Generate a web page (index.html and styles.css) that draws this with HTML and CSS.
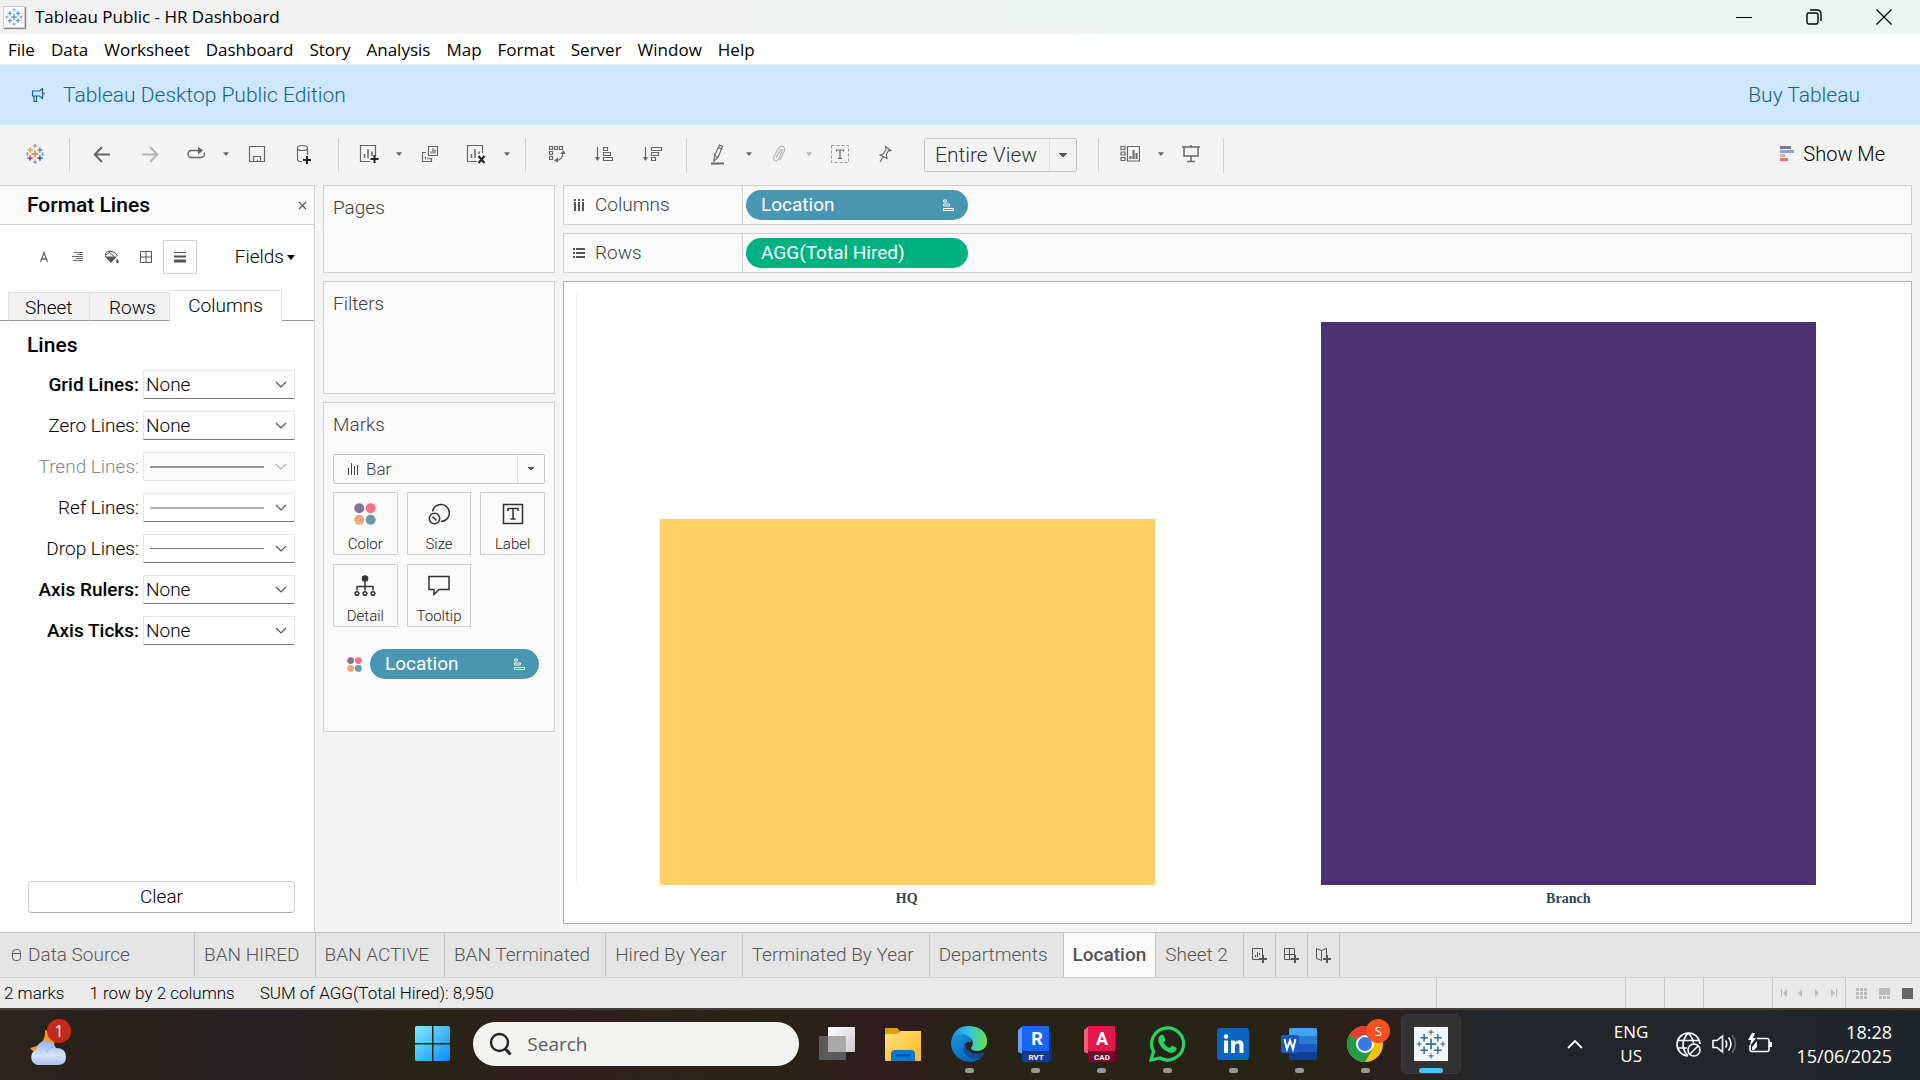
FILE: index.html
```html
<!DOCTYPE html>
<html lang="en">
<head>
<meta charset="utf-8">
<title>Tableau Public - HR Dashboard</title>
<link rel="stylesheet" href="styles.css">
</head>
<body>
<svg class="defs" aria-hidden="true">
  <defs>
    <symbol id="logo" viewBox="0 0 24 24">
      <path d="M12 7.8v8.4M7.8 12h8.4" stroke-width="1.4"/>
      <path d="M6.5 4v6M3.5 7h6M17.5 4v6M14.5 7h6M6.5 14v6M3.5 17h6M17.5 14v6M14.5 17h6" stroke-width="1.2"/>
      <path d="M12 .5v4M10 2.500h4M12 19.500v4M10 21.500h4M2.500 10v4M.5 12h4M21.500 10v4M19.500 12h4" stroke-width=".9"/>
    </symbol>
    <symbol id="caret" viewBox="0 0 8 5"><path d="M0 0h8l-4 5z" fill="currentColor"/></symbol>
    <symbol id="sorted" viewBox="0 0 12 13"><path d="M1 1h3v2H1zM1 5h6v2H1zM1 9.500h10v2H1z" fill="none" stroke="currentColor"/></symbol>
    <symbol id="dots" viewBox="0 0 22 22">
      <circle cx="5.300" cy="5.300" r="5" fill="#857099"/><circle cx="16.700" cy="5.300" r="5" fill="#fa6f80"/>
      <circle cx="5.300" cy="16.700" r="5" fill="#f4a77f"/><circle cx="16.700" cy="16.700" r="5" fill="#6f98a6"/>
    </symbol>
  </defs>
</svg>

<header class="titlebar">
  <span class="app-icon"><svg width="18" height="18" stroke="#3a7fa8"><use href="#logo"/></svg></span>
  <h1 class="app-title">Tableau Public - HR Dashboard</h1>
  <div class="window-buttons">
    <button aria-label="Minimize"><svg width="16" height="16"><path d="M0 8.500h16" stroke="#000" stroke-width="1"/></svg></button>
    <button aria-label="Restore"><svg width="16" height="16" fill="none" stroke="#000" stroke-width="1.400"><rect x="1" y="4" width="11" height="11" rx="2"/><path d="M4 1h7q4 0 4 4v7"/></svg></button>
    <button aria-label="Close"><svg width="16" height="16"><path d="M.5.5l15 15M15.500.5l-15 15" stroke="#000" stroke-width="1.300"/></svg></button>
  </div>
</header>

<nav class="menubar" aria-label="Main menu">
  <button>File</button><button>Data</button><button>Worksheet</button><button>Dashboard</button><button>Story</button><button>Analysis</button><button>Map</button><button>Format</button><button>Server</button><button>Window</button><button>Help</button>
</nav>

<div class="banner">
  <svg class="megaphone" width="14" height="14" fill="none" stroke="#17628f" stroke-width="1.200"><path d="M8.500 3H1.500v5h7l3 2.500v-10zM3 8v5.500h2.500V8M13 4.500v2"/></svg>
  <span>Tableau Desktop Public Edition</span>
  <a href="#" class="buy">Buy Tableau</a>
</div>

<div class="toolbar" role="toolbar" aria-label="Toolbar">
  <button class="tool start" aria-label="Start page"><svg width="18" height="22" viewBox="2 0 20 24" fill="none">
    <path d="M12 8v8M8 12h8" stroke="#e8762c" stroke-width="1.500"/>
    <path d="M6.500 4.500v6M3.500 7.500h6" stroke="#eb912b" stroke-width="1.400"/><path d="M17.500 4.500v6M14.500 7.500h6" stroke="#59879b" stroke-width="1.400"/>
    <path d="M6.500 13.500v6M3.500 16.500h6" stroke="#c72035" stroke-width="1.400"/><path d="M17.500 13.500v6M14.500 16.500h6" stroke="#1f457e" stroke-width="1.400"/>
    <path d="M12 1v4M10 3h4M12 19v4M10 21h4M3.500 10v4M2 12h3M20.500 10v4M19 12h3" stroke="#7199a6" stroke-width="1.200"/></svg></button>
  <i class="sep"></i>
  <button class="tool wide" aria-label="Undo"><svg width="18" height="18"><path d="M17 9.500H2M9 2L1.800 9.500 9 17"/></svg></button>
  <button class="tool wide off" aria-label="Redo"><svg width="18" height="18"><path d="M1 9.500h15M9 2l7.200 7.500L9 17"/></svg></button>
  <button class="tool" aria-label="Replay"><svg width="19" height="16"><path d="M12 4.500H4.500a3.500 3.500 0 0 0 0 7H14a3.500 3.500 0 0 0 3.200-5" stroke-width="1.400"/><path d="M11 .5l5 4-5 4z" fill="currentColor" stroke="none"/></svg></button>
  <button class="drop" aria-label="Replay options"><svg width="6" height="4"><use href="#caret"/></svg></button>
  <button class="tool mid" aria-label="Save"><svg width="18" height="18"><path d="M1.500 1.500h15v15h-15zM5.500 16.500v-5h7v5M9.500 16.500v-2" stroke-width="1.200"/></svg></button>
  <button class="tool wide" aria-label="New data source"><svg width="16" height="20"><path d="M6 17.500H3.500Q1.500 17 1.500 15.500V4q0-2.500 5-2.500T11.500 4v7M1.500 4.500q0 2 5 2t5-2" stroke-width="1.200"/><path d="M11 12v8M7 16h8" stroke="#222" stroke-width="2"/></svg></button>
  <i class="sep"></i>
  <button class="tool" aria-label="New worksheet"><svg width="20" height="20"><path d="M11 17.500H1.500v-16h15V12" stroke-width="1.200"/><path d="M5.500 14v-4M9 14V5M13 12V7.500" stroke-width="1.500"/><path d="M15.500 11v8M11.500 15h8" stroke="#222" stroke-width="2"/></svg></button>
  <button class="drop" aria-label="New worksheet options"><svg width="6" height="4"><use href="#caret"/></svg></button>
  <button class="tool mid" aria-label="Duplicate"><svg width="18" height="18"><path d="M7.500 1.500h9v9h-9zM5 7.500H1.500v9h9V13M4.500 14.500v-3M7 14.500v-2M9 14.500v-2M10 8.500v-2M12 8.500v-5M14 8.500v-4" stroke-width="1.200"/></svg></button>
  <button class="tool mid" aria-label="Clear sheet"><svg width="20" height="20"><path d="M11 17.500H1.500v-16h15V9" stroke-width="1.200"/><path d="M5.500 14v-4M9 14V5M13 10V7.500" stroke-width="1.500"/><path d="M12.500 12l6 7M18.500 12l-6 7" stroke="#222" stroke-width="2"/></svg></button>
  <button class="drop" aria-label="Clear options"><svg width="6" height="4"><use href="#caret"/></svg></button>
  <i class="sep"></i>
  <button class="tool mid" aria-label="Swap rows and columns"><svg width="18" height="18"><path d="M1.500 1.500h3v3h-3zM6.500 1.500h3v3h-3zM11.500 1.500h3v3h-3zM1.500 6.500h3v3h-3zM1.500 11.500h3v3h-3zM8 15.500q6.500 0 7-8" stroke-width="1.200"/><path d="M6 15.500l4-3v5zM15.500 5l-3 4h5z" fill="currentColor" stroke="none"/></svg></button>
  <button class="tool wide" aria-label="Sort ascending"><svg width="20" height="18"><path d="M3.500 2v13M9.500 2.500h4v3h-4zM9.500 7.500h7v3h-7zM9.500 12.500h9v3h-9z" stroke-width="1.200"/><path d="M1 12h5l-2.500 4z" fill="currentColor" stroke="none"/></svg></button>
  <button class="tool wide" aria-label="Sort descending"><svg width="20" height="18"><path d="M3.500 2v13M9.500 2.500h10v3h-10zM9.500 7.500h7v3h-7zM9.500 12.500h4v3h-4z" stroke-width="1.200"/><path d="M1 12h5l-2.500 4z" fill="currentColor" stroke="none"/></svg></button>
  <i class="sep"></i>
  <button class="tool mid" aria-label="Highlight"><svg width="14" height="22"><path d="M8.500 2l3 1.500-4.500 11-4 3.500.5-5.500zM3.500 12.500L7 14.500M7.500 4.500l3 1.500" stroke-width="1.200"/><path d="M0 20.500h13" stroke-width="2"/></svg></button>
  <button class="drop" aria-label="Highlight options"><svg width="6" height="4"><use href="#caret"/></svg></button>
  <button class="tool off" aria-label="Group members"><svg width="14" height="18"><path d="M4 12.500L8.500 5q1.500-1.500 2 .5L6.500 14Q4.500 17 2.500 15.500 1 14 2 11.500L6.500 3Q8.500.5 11 1.500 13.500 3.500 12 7l-4.500 8.500" stroke-width="1.100"/></svg></button>
  <button class="drop off" aria-label="Group options"><svg width="6" height="4"><use href="#caret"/></svg></button>
  <button class="tool mid" aria-label="Show mark labels"><svg width="18" height="18"><rect x=".5" y=".5" width="17" height="17" stroke="#999" stroke-width="1" stroke-dasharray="3 2"/><path d="M5.500 6.500V5h7v1.500M9 5v8.500M7 13.500h4" stroke-width="1.200"/></svg></button>
  <button class="tool" aria-label="Fix axes"><svg width="15" height="18"><path d="M7.500 1.500l5.500 4-1.500.5-1-.5-2 4 .5 4-3-1.500L2 10l3-1 3-4.500zM5 12l-3 5" stroke-width="1.100"/></svg></button>
  <select class="fit" aria-label="Fit"><option>Entire View</option></select>
  <i class="sep"></i>
  <button class="tool mid" aria-label="Show cards"><svg width="20" height="18"><path d="M1 1.500h4v3H1zM1 7h4v3H1zM1 12.500h4v3H1zM7.500 1.500h12v14.500h-12z" stroke-width="1.200"/><path d="M10.500 14v-3M13.500 14V5M16.500 14V8" stroke-width="2"/></svg></button>
  <button class="drop" aria-label="Card options"><svg width="6" height="4"><use href="#caret"/></svg></button>
  <button class="tool" aria-label="Presentation mode"><svg width="18" height="18"><path d="M0 2h18M9 0v2M2 2v9h14V2M9 11v5M5 16.500h8" stroke-width="1.500"/></svg></button>
  <i class="sep"></i>
  <button class="show-me"><svg width="15" height="16"><path fill="#857099" d="M0 0h11v3H0z"/><path fill="#86a8d0" d="M0 4h14v3H0z"/><path fill="#f4a77f" d="M0 8h5v3H0z"/><path fill="#fa6f80" d="M0 12h8v3H0z"/></svg>Show Me</button>
</div>

<main class="workspace">
  <aside class="format" aria-label="Format Lines">
    <div class="format-head"><h2>Format Lines</h2><button aria-label="Close pane"><svg width="9" height="9"><path d="M1 1l7 7M8 1L1 8" stroke="#555" stroke-width="1.200"/></svg></button></div>
    <div class="format-kinds">
      <button aria-label="Font"><svg width="10" height="12"><path d="M1.500 11L5 1.500 8.500 11M3 8h4" fill="none" stroke="#666" stroke-width="1.300"/></svg></button>
      <button aria-label="Alignment"><svg width="12" height="12"><path d="M2 1.500h9M5 3.500h6M0 5.500h11M4 7.500h7M1 9.500h10" stroke="#666"/></svg></button>
      <button aria-label="Shading"><svg width="16" height="14"><path d="M1.500 7Q1 2.500 3.500 1.500q3-1 7.500 1L13.500 6M4.500 1.500L10 6.500M2 5l5-4" fill="none" stroke="#555"/><path d="M1 6.500h12L7 13zM13 8l2 4q-1.500 2-3 0z" fill="#555"/></svg></button>
      <button aria-label="Borders"><svg width="12" height="12"><path d="M.5.5h11v11H.5zM6 .5v11M.5 6h11" fill="none" stroke="#555"/></svg></button>
      <button class="current" aria-label="Lines"><svg width="12" height="12"><path d="M0 1.500h12" stroke="#555"/><path d="M0 5.500h12" stroke="#555" stroke-width="2"/><path d="M0 10h12" stroke="#555" stroke-width="3"/></svg></button>
      <button class="fields">Fields<svg width="8" height="5"><use href="#caret"/></svg></button>
    </div>
    <div class="format-tabs"><button>Sheet</button><button>Rows</button><button class="current">Columns</button></div>
    <h3>Lines</h3>
    <div class="line-form">
      <label class="set" for="grid">Grid Lines:</label><select id="grid"><option>None</option></select>
      <label for="zero">Zero Lines:</label><select id="zero"><option>None</option></select>
      <label class="dim" for="trend">Trend Lines:</label><select id="trend" class="line-mid" disabled><option></option></select>
      <label for="ref">Ref Lines:</label><select id="ref" class="line-pale"><option></option></select>
      <label for="dropl">Drop Lines:</label><select id="dropl" class="line-thin"><option></option></select>
      <label class="set" for="rulers">Axis Rulers:</label><select id="rulers"><option>None</option></select>
      <label class="set" for="ticks">Axis Ticks:</label><select id="ticks"><option>None</option></select>
    </div>
    <button class="clear">Clear</button>
  </aside>

  <div class="cards">
    <section class="card pages"><h2>Pages</h2></section>
    <section class="card filters"><h2>Filters</h2></section>
    <section class="card marks">
      <h2>Marks</h2>
      <div class="mark-type">
        <svg width="12" height="14"><path d="M1.500 13V6M4.500 13V1M7.500 13V4M10.500 13V3" stroke="#444"/></svg>
        <select aria-label="Mark type"><option>Bar</option></select>
      </div>
      <div class="mark-grid">
        <button><svg width="22" height="22"><use href="#dots"/></svg>Color</button>
        <button><svg width="22" height="22" fill="none" stroke="#333" stroke-width="1.500"><path d="M4.500 8.500A8.500 8.500 0 1 1 13 18.500"/><circle cx="6.500" cy="15.500" r="5.200"/><path d="M4.500 13.500l4 4"/></svg>Size</button>
        <button><svg width="22" height="22" fill="none" stroke="#333" stroke-width="1.500"><rect x="1.500" y="1.500" width="19" height="19"/><path d="M6 8V5.500h10V8M11 5.500V16M8.500 16h5"/></svg>Label</button>
        <button><svg width="22" height="22" fill="none" stroke="#333" stroke-width="1.500"><circle cx="11" cy="3.500" r="3.300" fill="#333" stroke="none"/><path d="M11 6v9.500M3 15.500V11.500h16v4"/><circle cx="3" cy="18.500" r="1.800"/><circle cx="11" cy="18.500" r="1.800"/><circle cx="19" cy="18.500" r="1.800"/></svg>Detail</button>
        <button><svg width="22" height="22" fill="none" stroke="#333" stroke-width="1.500"><path d="M1 1.500h20v13H11l-5 5v-5H1z"/></svg>Tooltip</button>
      </div>
      <div class="mark-field"><svg width="15" height="15"><use href="#dots"/></svg><button class="pill blue">Location<svg width="13" height="13"><use href="#sorted"/></svg></button></div>
    </section>
  </div>

  <div class="sheet">
    <div class="shelf"><div class="shelf-name"><svg width="12" height="12"><path d="M1 0h2v2H1zM5 0h2v2H5zM9 0h2v2H9zM1 3h2v9H1zM5 3h2v9H5zM9 3h2v9H9z" fill="#555"/></svg>Columns</div><button class="pill blue">Location<svg width="13" height="13"><use href="#sorted"/></svg></button></div>
    <div class="shelf"><div class="shelf-name"><svg width="12" height="12"><path d="M0 1h2v2H0zM3 1h9v2H3zM0 5h2v2H0zM3 5h9v2H3zM0 9h2v2H0zM3 9h9v2H3z" fill="#555"/></svg>Rows</div><button class="pill green">AGG(Total Hired)</button></div>
    <div class="view">
      <div class="plot">
        <div class="bar hq" style="height:62%"></div>
        <div class="bar branch" style="height:95.300%"></div>
      </div>
      <div class="axis"><span>HQ</span><span>Branch</span></div>
    </div>
  </div>
</main>

<nav class="sheets" aria-label="Sheets">
  <button class="source"><svg width="9" height="12" fill="none" stroke="#555"><rect x=".5" y=".5" width="8" height="11" rx="3"/><path d="M.5 4.500h8"/></svg>Data Source</button>
  <button>BAN HIRED</button><button>BAN ACTIVE</button><button>BAN Terminated</button><button>Hired By Year</button><button>Terminated By Year</button><button>Departments</button><button class="current">Location</button><button>Sheet 2</button>
  <button class="add" aria-label="New worksheet"><svg width="16" height="16" fill="none" stroke="#555"><path d="M8 12.500H1.500v-11h10V8M4.500 10V8M6.500 10V5M8.500 8V6"/><path d="M12 8v8M8 12h8" stroke-width="2"/></svg></button>
  <button class="add" aria-label="New dashboard"><svg width="16" height="16" fill="none" stroke="#555"><path d="M8 12.500H1.500v-11h10V8M6.500 1.500v11M1.500 7.500h10"/><path d="M12 8v8M8 12h8" stroke-width="2"/></svg></button>
  <button class="add" aria-label="New story"><svg width="16" height="16" fill="none" stroke="#555"><path d="M7 13.500l-5.500-2v-10l5 2 5-2V8M6.500 3.500v10"/><path d="M12 8v8M8 12h8" stroke-width="2"/></svg></button>
</nav>

<footer class="status">
  <span>2 marks</span><span>1 row by 2 columns</span><span>SUM of AGG(Total Hired): 8,950</span>
  <div class="slots"><i></i><i></i><i></i><i></i>
    <div class="pager">
      <button aria-label="First"><svg width="7" height="8"><path d="M0 0h1v8H0zM6 0v8L2 4z"/></svg></button>
      <button aria-label="Previous"><svg width="7" height="8"><path d="M5 0v8L1 4z"/></svg></button>
      <button aria-label="Next"><svg width="7" height="8"><path d="M1 0v8l4-4z"/></svg></button>
      <button aria-label="Last"><svg width="7" height="8"><path d="M6 0h1v8H6zM1 0v8l4-4z"/></svg></button>
    </div>
    <div class="modes">
      <button aria-label="Sheet sorter"><svg width="11" height="11"><path d="M0 0h3v3H0zM4 0h3v3H4zM8 0h3v3H8zM0 4h3v3H0zM4 4h3v3H4zM8 4h3v3H8zM0 8h3v3H0zM4 8h3v3H4zM8 8h3v3H8z"/></svg></button>
      <button aria-label="Filmstrip"><svg width="11" height="11"><path d="M0 0h11v7H0zM0 8h3v3H0zM4 8h3v3H4zM8 8h3v3H8z"/></svg></button>
      <button class="current" aria-label="Tabs"><svg width="11" height="11"><path d="M0 0h11v11H0z"/></svg></button>
    </div>
  </div>
</footer>

<div class="taskbar">
  <button class="weather" aria-label="Weather, 1 alert">
    <svg width="42" height="46" viewBox="0 0 42 46">
      <defs><linearGradient id="cl" x2="0" y2="1"><stop offset="0" stop-color="#8fb4ee"/><stop offset=".6" stop-color="#d5e4fa"/><stop offset="1" stop-color="#a9c1ee"/></linearGradient></defs>
      <path d="M16 9q1 15-15 18 7 9 18 4 10-7 5-17-3-4-8-5z" fill="#f49b20"/>
      <path d="M8 44a8 8 0 0 1-1-15Q9 20 17 20q7 0 10 7 10 0 10 9 0 8-8 8z" fill="url(#cl)"/>
      <path d="M17 32q2-6 8-6" fill="none" stroke="#8cabe0"/>
    </svg><span class="badge">1</span>
  </button>
  <div class="apps">
    <button class="app" aria-label="Start"><svg width="36" height="36"><defs><linearGradient id="win" x2="1" y2="1"><stop offset="0" stop-color="#7deeff"/><stop offset="1" stop-color="#0b8cf5"/></linearGradient></defs><path d="M1.500 0H17v17H0V1.500Q0 0 1.500 0zM18.500 0h15q1.500 0 1.500 1.500V17H18.500zM0 18.500h17V35H1.500Q0 35 0 33.500zM18.500 18.500H35v15q0 1.500-1.500 1.500h-15z" fill="url(#win)"/></svg></button>
    <label class="search"><svg width="24" height="24" fill="none" stroke="#222"><circle cx="10.500" cy="10.500" r="8.500" stroke-width="2.400"/><path d="M16.500 17l5 5.500" stroke-width="3"/></svg><input type="search" placeholder="Search" aria-label="Search"></label>
    <button class="app" aria-label="Task view"><svg width="36" height="36"><defs><linearGradient id="tv" x2="1" y2="1"><stop offset="0" stop-color="#fff"/><stop offset="1" stop-color="#ccc"/></linearGradient></defs><rect y="10" width="27" height="24" rx="1" fill="#5a5a5a"/><rect x="9" y="1" width="27" height="25" rx="1" fill="url(#tv)"/><rect x="9" y="10" width="18" height="16" fill="#a9a9a9"/></svg></button>
    <button class="app" aria-label="File Explorer"><svg width="36" height="34"><defs><linearGradient id="fe" x2="1" y2="1"><stop offset="0" stop-color="#ffe28a"/><stop offset="1" stop-color="#fcb714"/></linearGradient></defs><path d="M0 2q0-1 1-1h11l4 4h19q1 0 1 1v6H0z" fill="#e0a008"/><path d="M0 7h12l4-3h20v29q0 1-1 1H1q-1 0-1-1z" fill="url(#fe)"/><path d="M6 34v-7q0-4 4-4h16q4 0 4 4v7z" fill="#0f78cf"/><path d="M11 28.500h14" stroke="#07438a" stroke-width="2"/></svg></button>
    <button class="app run" aria-label="Edge"><svg width="36" height="36"><defs><linearGradient id="e1" x2="1"><stop offset="0" stop-color="#1b8ee0"/><stop offset=".5" stop-color="#35c1e0"/><stop offset="1" stop-color="#6be34f"/></linearGradient><linearGradient id="e2" x2="1" y2="1"><stop offset="0" stop-color="#1b94e0"/><stop offset="1" stop-color="#0a57b0"/></linearGradient></defs><path d="M0 17Q2 0 18 0q17 1 18 15 0 9-9 10-7 0-7-3 3-4 1-8Q16 5 0 17z" fill="url(#e1)"/><path d="M0 18Q1 9 10 8q9 0 11 8-6-1-8 4-1 9 8 12 6 1 11-2-6 6-13 6Q2 34 0 18z" fill="url(#e2)"/><path d="M13 19q-2 8 5 12 8 3 14-2 2-2 1-3-8 4-15-1-4-3-3-8z" fill="#124e9c"/></svg></button>
    <button class="app run" aria-label="Revit"><svg width="34" height="36"><path d="M0 4l5-4v28l-5-2z" fill="#6f9cf0"/><path d="M4 0h27v25H4z" fill="#1866f5"/><path d="M31 6l3 0v30h-3z" fill="#0f2f74"/><path d="M4 25h27v11H4z" fill="#123c94"/><g fill="#fff" text-anchor="middle" class="tile-text"><text x="19" y="19" font-size="18">R</text><text x="18" y="34" font-size="8">RVT</text></g></svg></button>
    <button class="app run" aria-label="AutoCAD"><svg width="34" height="36"><path d="M0 4l5-4v28l-5-2z" fill="#f0607c"/><path d="M4 0h27v25H4z" fill="#e5154e"/><path d="M31 6h3v30h-3z" fill="#5f0822"/><path d="M4 25h27v11H4z" fill="#74092b"/><g fill="#fff" text-anchor="middle" class="tile-text"><text x="18" y="19" font-size="18">A</text><text x="18" y="34" font-size="8">CAD</text></g></svg></button>
    <button class="app run" aria-label="WhatsApp"><svg width="36" height="36"><path d="M2 34l2.500-8.500A16 16 0 1 1 11 32z" fill="none" stroke="#25d366" stroke-width="3.200"/><path d="M12 9q2-1 3 1l1.500 4-2 2.500q2 4 6 5.500l2.500-2.500 4 2q1.500 1 0 3-3 4-8 1.500-7-3-9.500-10Q8.500 11 12 9z" fill="#25d366"/></svg></button>
    <button class="app run" aria-label="LinkedIn"><svg width="32" height="32"><rect width="32" height="32" rx="3" fill="#0a66c2"/><path d="M7 12.500h4V25H7zM14 12.500h4v2q1.500-2.300 4.200-2.300 4.300 0 4.300 5.300V25h-4v-6.500q0-3-2-3-2.500 0-2.500 3V25h-4z" fill="#fff"/><circle cx="9" cy="8.500" r="2.300" fill="#fff"/></svg></button>
    <button class="app run" aria-label="Word"><svg width="36" height="32"><rect x="8" width="28" height="32" rx="2" fill="#103f91"/><path d="M8 16h28v8H8z" fill="#185abd"/><path d="M8 8h28v8H8z" fill="#2b7cd3"/><path d="M8 8V2q0-2 2-2h24q2 0 2 2v6z" fill="#41a5ee"/><rect y="7" width="18" height="18" rx="2" fill="#185abd"/><path d="M3.500 11l2.500 10L9 12.500 12 21l2.500-10" fill="none" stroke="#fff" stroke-width="2"/></svg></button>
    <button class="app run" aria-label="Chrome"><svg width="36" height="36"><circle cx="18" cy="18" r="18" fill="#f9c20a"/><path d="M18 18L2.400 9A18 18 0 0 1 33.600 9z" fill="#e33b2e"/><path d="M18 18L2.400 9A18 18 0 0 0 18 36l8-13.500z" fill="#229a48"/><circle cx="18" cy="18" r="9" fill="#fff"/><circle cx="18" cy="18" r="7" fill="#3279ea"/></svg><span class="badge orange">S</span></button>
    <button class="app run active" aria-label="Tableau Public"><svg width="34" height="34"><rect width="34" height="34" fill="#f4f5f6"/><svg x="2" y="2" width="30" height="30" stroke="#2f7299"><use href="#logo"/></svg></svg></button>
  </div>
  <div class="tray">
    <button class="chevron" aria-label="Hidden icons"><svg width="16" height="10"><path d="M1 9l7-7 7 7" fill="none" stroke="#fff" stroke-width="1.800"/></svg></button>
    <button class="lang">ENG<br>US</button>
    <button class="quick" aria-label="Network, volume, battery">
      <svg width="25" height="25" fill="none" stroke="#fff" stroke-width="1.600"><path d="M12 24A11.500 11.500 0 1 1 24 12M12 24q-10-11 0-23 5 5 5.500 10M1 8.500h22M1 16h10"/><circle cx="18" cy="18" r="6"/><path d="M14 22l8-8"/></svg>
      <svg width="25" height="22" fill="none" stroke="#fff" stroke-width="1.600"><path d="M1 7.500h4L10.500 3v16L5 14.500H1zM13.500 7.500q2.500 3.500 0 7M16.500 4.500q5 6.500 0 13"/><path d="M20 2q7 9 0 18" stroke="#666"/></svg>
      <svg width="25" height="22" fill="none" stroke="#fff" stroke-width="1.600"><path d="M9 5.500h10q2 0 2 2v9q0 2-2 2H4q-2 0-2-2V12"/><path d="M4 0L0 7h3l-1 6 6-8H5l2-5zM4 17v-3l5-6v6l-3 3zM21 9h3v5h-3z" fill="#fff" stroke="none"/></svg>
    </button>
    <button class="clock">18:28<br>15/06/2025</button>
  </div>
</div>
</body>
</html>
```
FILE: styles.css
```css
* { box-sizing: border-box; }

:root {
  --ui: Roboto, "Liberation Sans", sans-serif;
  --system: "Open Sans", "Noto Sans", sans-serif;
  --rule: #d0d0d0;
  --ink: #404040;
}

body {
  margin: 0;
  min-height: 100vh;
  display: flex;
  flex-direction: column;
  background: #f4f4f4;
  color: #000;
  font: 300 19px/24px var(--ui);
}

h1, h2, h3 { margin: 0; font: inherit; }
button { margin: 0; padding: 0; border: 0; background: none; color: inherit; font: inherit; }
select { margin: 0; border-radius: 0; color: inherit; font: inherit; appearance: none; }
svg { display: block; flex: none; }
.defs { position: absolute; width: 0; height: 0; }

/* Window frame */
.titlebar {
  height: 34px;
  display: flex;
  align-items: center;
  padding: 0 1px 0 3px;
  background: linear-gradient(90deg, #f2f1f3, #f2f2f2 35%, #e9f5f1 70%, #eaf6f2);
  font: 400 17px/24px var(--system);
}
.app-icon { padding: 1px; background: #fafafa; border: 1px solid #ccc; box-shadow: 1px 1px 1px #888; }
.app-title { padding-left: 10px; }
.window-buttons { margin-left: auto; display: flex; }
.window-buttons button { width: 70px; height: 34px; display: grid; place-items: center; }

.menubar {
  height: 31px;
  display: flex;
  gap: 16px;
  padding: 0 8px;
  background: #fff;
  border-bottom: 1px solid #eee;
  font: 400 17px/32px var(--system);
}

.banner {
  height: 60px;
  display: flex;
  align-items: center;
  padding: 0 60px 0 31px;
  background: #cfe8fe;
  color: #17628f;
  font-size: 21px;
}
.megaphone { margin-right: 18px; }
.buy { margin-left: auto; color: inherit; text-decoration: none; }

/* Toolbar */
.toolbar { height: 60px; display: flex; align-items: center; color: #666; }
.tool { width: 44px; height: 36px; display: grid; place-items: center; padding-bottom: 2px; }
.tool svg { fill: none; stroke: currentColor; stroke-width: 2; }
.tool.mid { width: 46px; }
.tool.wide { width: 48px; }
.tool.start { width: 48px; margin-left: 11px; }
.tool.start svg { stroke: none; }
.drop { width: 16px; height: 36px; display: grid; place-items: center; padding-bottom: 2px; }
.off { color: #b4b4b4; }
.sep { width: 1px; height: 35px; margin: 0 8px 0 10px; background: var(--rule); }
.fit {
  width: 153px;
  height: 34px;
  margin: 0 11px 0 17px;
  padding: 0 0 0 10px;
  border: 1px solid #c4c4c4;
  border-radius: 2px;
  color: #333;
  font-size: 21px;
  background:
    conic-gradient(from -39deg at 50% 100%, #555 78deg, transparent 0) right 9px center / 8px 5px no-repeat,
    linear-gradient(#ddd, #ddd) right 26px center / 1px 100% no-repeat,
    #f4f4f4;
}
.show-me { margin-left: auto; margin-right: 35px; display: flex; align-items: center; gap: 8px; padding-bottom: 2px; color: #000; font-size: 20px; }

/* Workspace */
.workspace { flex: 1; display: grid; grid-template-columns: 315px 232px 1fr; column-gap: 8px; padding-right: 8px; }

.format {
  display: flex;
  flex-direction: column;
  background: #fff;
  border-top: 1px solid var(--rule);
  border-right: 1px solid var(--rule);
}
.format-head {
  height: 39px;
  display: flex;
  align-items: center;
  justify-content: space-between;
  padding: 0 7px 0 27px;
  background: #fafafa;
  border-bottom: 1px solid var(--rule);
}
.format h2 { font-size: 21px; font-weight: 500; }
.format h3 { padding: 12px 27px 13px; font-size: 21px; font-weight: 500; }
.format-kinds { display: flex; align-items: center; padding: 15px 19px 0 27px; }
.format-kinds button { width: 34px; height: 34px; display: grid; place-items: center; }
.format-kinds .current { border: 1px solid var(--rule); }
.format-kinds .fields { width: auto; margin-left: auto; display: flex; align-items: center; gap: 3px; }

.format-tabs { display: flex; align-items: flex-end; margin-top: 16px; padding-left: 8px; background: linear-gradient(#999, #999) bottom / 100% 1px no-repeat; }
.format-tabs button { width: 82px; height: 29px; padding: 3px 16px 0; background: #f2f2f2; border: 1px solid #e2e2e2; border-bottom-color: #999; text-align: left; }
.format-tabs button + button { border-left: 0; width: 80px; padding-left: 19px; }
.format-tabs .current.current { width: 112px; height: 31px; padding: 0; background: #fff; border-bottom-color: #fff; text-align: center; }

.line-form { display: grid; grid-template-columns: 139px 152px; column-gap: 4px; row-gap: 12px; align-items: center; }
.line-form label { text-align: right; }
.line-form .set { font-weight: 500; }
.line-form .dim { color: #888; }
.line-form select {
  height: 29px;
  padding: 0 0 0 2px;
  border: 1px solid #e5e5e5;
  border-bottom-color: #777;
  opacity: 1;
  --arrow: url("data:image/svg+xml,%3Csvg xmlns='http://www.w3.org/2000/svg' width='12' height='8'%3E%3Cpath d='M1 1l5 5 5-5' fill='none' stroke='%23555' stroke-width='1.200'/%3E%3C/svg%3E");
  --line: linear-gradient(transparent, transparent);
  background: var(--arrow) right 7px center no-repeat, var(--line) 6px center / 114px var(--weight, 1px) no-repeat, #fff;
}
.line-form .line-mid {
  --arrow: url("data:image/svg+xml,%3Csvg xmlns='http://www.w3.org/2000/svg' width='12' height='8'%3E%3Cpath d='M1 1l5 5 5-5' fill='none' stroke='%23aaa' stroke-width='1.200'/%3E%3C/svg%3E");
  --line: linear-gradient(#999, #999);
  --weight: 2px;
  border-bottom-color: #e5e5e5;
  background-color: #fafafa;
}
.line-form .line-pale { --line: linear-gradient(#b2b2b2, #b2b2b2); --weight: 2px; }
.line-form .line-thin { --line: linear-gradient(#777, #777); }

.clear { height: 32px; margin: auto 19px 19px 28px; border: 1px solid #d0d0d0; border-bottom-color: #aaa; border-radius: 4px; background: #fdfdfd; }

/* Cards */
.cards { display: flex; flex-direction: column; gap: 8px; color: var(--ink); }
.card { padding: 10px 9px; background: #fafafa; border: 1px solid var(--rule); }
.pages { height: 88px; }
.filters { height: 113px; }
.marks { height: 330px; }
.mark-type { display: flex; align-items: center; margin-top: 17px; height: 30px; border: 1px solid #c4c4c4; border-radius: 2px; padding-left: 13px; font-size: 17px; }
.mark-type select {
  flex: 1;
  height: 28px;
  padding: 0 0 0 7px;
  border: 0;
  background:
    conic-gradient(from -39deg at 50% 100%, #555 78deg, transparent 0) right 9px center / 8px 4px no-repeat,
    linear-gradient(#ddd, #ddd) right 26px center / 1px 100% no-repeat;
}
.mark-grid { display: grid; grid-template-columns: repeat(3, 1fr); gap: 9px; margin-top: 8px; }
.mark-grid button { height: 63px; display: flex; flex-direction: column; align-items: center; gap: 7px; padding-top: 10px; border: 1px solid var(--rule); color: #222; font-size: 15px; line-height: 24px; }
.mark-field { display: flex; align-items: center; gap: 8px; margin-top: 22px; padding: 0 6px 0 14px; }
.mark-field .pill { flex: 1; }

.pill { width: 222px; height: 30px; display: flex; align-items: center; justify-content: space-between; padding: 0 13px 0 15px; border-radius: 15px; color: #fff; font-weight: 400; }
.blue { background: #4996b2; }
.green { background: #00b180; }

/* Shelves and view */
.sheet { display: flex; flex-direction: column; gap: 8px; padding-bottom: 8px; }
.shelf { height: 40px; display: flex; align-items: center; gap: 3px; background: #fafafa; border: 1px solid var(--rule); }
.shelf-name { width: 179px; height: 38px; display: flex; align-items: center; gap: 10px; padding-left: 9px; border-right: 1px solid var(--rule); color: var(--ink); }
.view { flex: 1; display: flex; flex-direction: column; padding: 12px 12px 0; background: #fff; border: 1px solid #b0b0b0; }
.plot { flex: 1; display: grid; grid-template-columns: 1fr 1fr; align-items: end; border-left: 1px solid #eee; }
.bar { width: 74.8%; justify-self: center; }
.hq { background: #ffd167; }
.branch { background: #4c3272; }
.axis { height: 38px; display: grid; grid-template-columns: 1fr 1fr; text-align: center; color: #344456; font: 700 14px/28px "Liberation Serif", serif; }

/* Sheet tabs */
.sheets { height: 45px; display: flex; border-top: 1px solid #c4c4c4; background: #e5e5e5; color: #555; }
.sheets button { padding: 0 15px 0 9px; border-right: 1px solid #c4c4c4; }
.sheets .source { width: 195px; display: flex; align-items: center; gap: 7px; padding-left: 12px; }
.sheets .current { padding: 0 9px; background: #fafafa; font-weight: 500; }
.sheets .add { width: 32px; padding: 0; display: grid; place-items: center; }

.status { height: 31px; display: flex; gap: 25px; padding-left: 4px; background: #eaeaea; border-top: 1px solid #d0d0d0; font-size: 17px; line-height: 30px; }
.slots { margin-left: auto; display: grid; grid-template-columns: 189px 39px 39px 69px 73px 75px; }
.slots > * { border-left: 1px solid #c8c8c8; }
.pager, .modes { display: flex; align-items: center; justify-content: space-between; padding: 0 8px; fill: #bbb; }
.modes { padding: 0 7px 0 10px; }
.modes .current { fill: #666; }

/* Taskbar */
.taskbar {
  height: 72px;
  display: grid;
  grid-template-columns: 7fr auto 8fr;
  align-items: center;
  padding: 0 0 2px 2px;
  border-top: 2px solid #444039;
  background: linear-gradient(90deg, #2b231c, #2a211c 8%, #242223 12%, #242223 15%, #292417 20%, #282415 23%, #301d20 28%, #2c231a 34%, #282415 40%, #301d20 46%, #282415 52%, #282415 68%, #2c1f1b 71%, #22262a 78%, #20252b);
  color: #fff;
  font: 400 17px/24px var(--system);
}
.weather { position: relative; justify-self: start; margin-left: 27px; }
.badge {
  position: absolute;
  top: -2px;
  right: 0;
  width: 24px;
  height: 24px;
  border-radius: 50%;
  background: #c42b1c;
  font-size: 16px;
  line-height: 24px;
  text-align: center;
}
.badge.orange { top: 5px; right: 5px; background: #f4511e; font-size: 13px; }
.apps { display: flex; align-items: center; gap: 6px; }
.app { position: relative; width: 60px; height: 60px; display: grid; place-items: center; border-radius: 6px; }
.run::after { content: ""; position: absolute; left: 26px; bottom: 1px; width: 9px; height: 5px; border-radius: 3px; background: #999; }
.active { background: #333232; border: 1px solid #3b3b3a; }
.active::after { left: 17px; bottom: 0; width: 24px; background: #4cc2ff; }
.search { width: 326px; height: 44px; display: flex; align-items: center; gap: 14px; margin: 0 2px 0 4px; padding-left: 16px; border-radius: 22px; background: #f3f3f1; }
.search input { width: 220px; padding: 0; border: 0; background: none; font: 400 19px/28px var(--system); }
.search input::placeholder { color: #5c5c5c; opacity: 1; }
.tile-text { font-family: var(--ui); font-weight: 700; }
.tray { justify-self: end; display: flex; align-items: center; padding-right: 28px; }
.lang { margin-left: 31px; font-size: 17px; }
.quick { display: flex; align-items: center; gap: 11px; margin: 0 23px 0 28px; }
.clock { text-align: right; font-size: 18px; }
```
